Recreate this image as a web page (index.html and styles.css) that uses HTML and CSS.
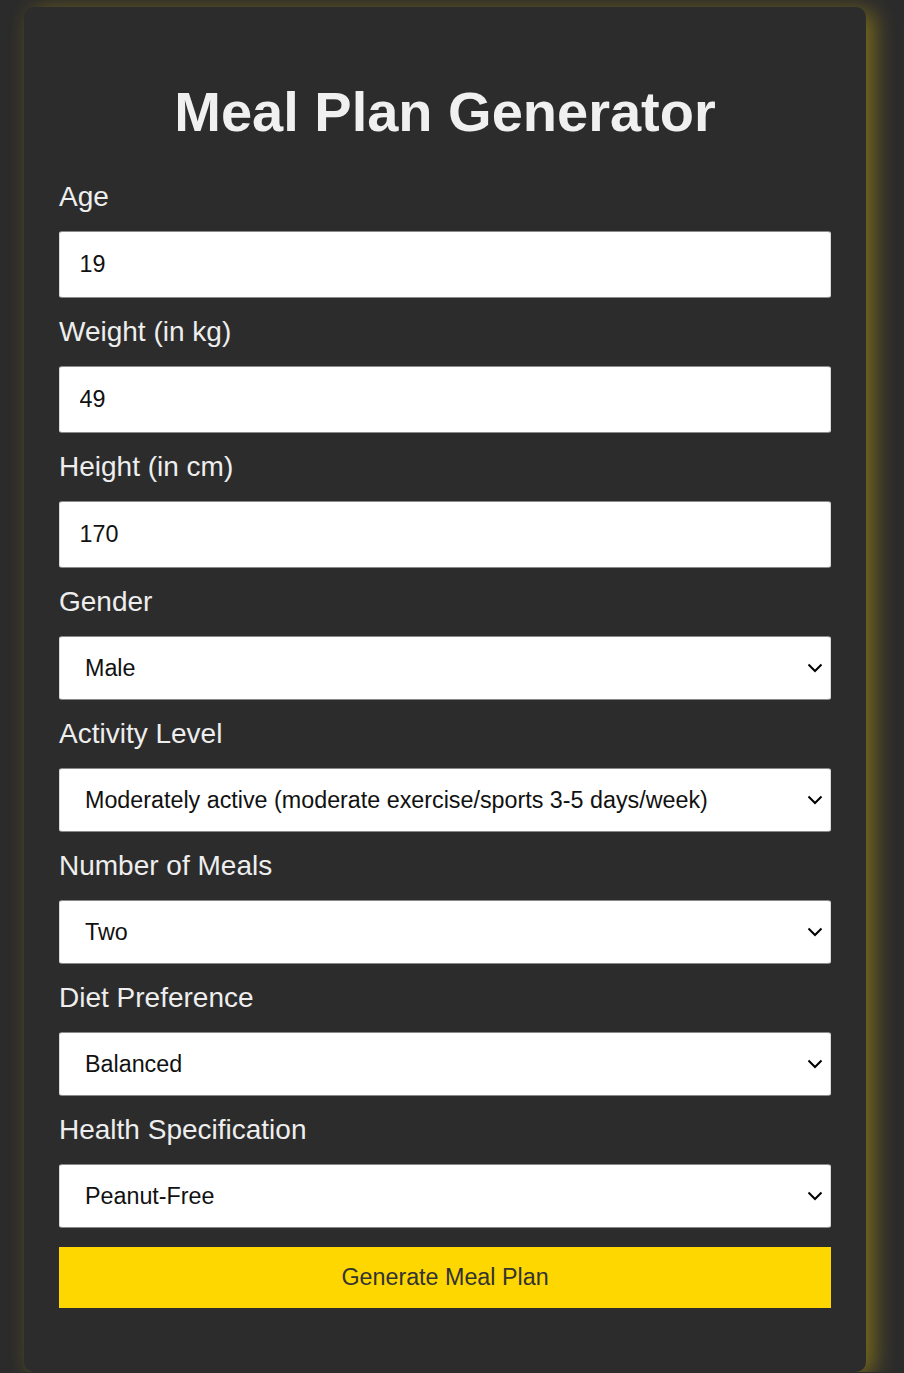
FILE: index.html
```html
<!DOCTYPE html>
<html lang="en">
<head>
<meta charset="utf-8">
<title>Meal Plan Generator</title>
<link rel="stylesheet" href="styles.css">
</head>
<body>
<div class="card">
  <h1 class="title">Meal Plan Generator</h1>
  <form class="form">
    <label class="label" for="age">Age</label>
    <input class="field" id="age" type="number" value="19">

    <label class="label" for="weight">Weight (in kg)</label>
    <input class="field" id="weight" type="number" value="49">

    <label class="label" for="height">Height (in cm)</label>
    <input class="field" id="height" type="number" value="170">

    <label class="label" for="gender">Gender</label>
    <select class="select" id="gender">
      <option>Male</option>
      <option>Female</option>
    </select>

    <label class="label" for="activity">Activity Level</label>
    <select class="select" id="activity">
      <option>Moderately active (moderate exercise/sports 3-5 days/week)</option>
    </select>

    <label class="label" for="meals">Number of Meals</label>
    <select class="select" id="meals">
      <option>Two</option>
    </select>

    <label class="label" for="diet">Diet Preference</label>
    <select class="select" id="diet">
      <option>Balanced</option>
    </select>

    <label class="label" for="health">Health Specification</label>
    <select class="select" id="health">
      <option>Peanut-Free</option>
    </select>

    <button class="button" type="button">Generate Meal Plan</button>
  </form>
</div>
</body>
</html>
```
FILE: styles.css
```css
html, body {
  margin: 0;
  padding: 0;
  background: #2b2b2b;
}

body {
  font-family: "Liberation Sans", Arial, sans-serif;
  padding: 7px 0 0 24px;
  overflow: hidden;
}

.card {
  box-sizing: border-box;
  width: 842px;
  height: 1365px;
  background: #2c2c2c;
  border-radius: 10px;
  padding: 35px 35px 0 35px;
  box-shadow: 8px 4px 22px rgba(255, 215, 0, 0.38);
}

.title {
  margin: 38px 0 37px;
  text-align: center;
  color: #f0f0f0;
  font-size: 56px;
  font-weight: bold;
  line-height: 64px;
}

.form {
  display: flex;
  flex-direction: column;
}

.label {
  display: block;
  color: #eeeeee;
  font-size: 28px;
  line-height: 32px;
  margin-bottom: 18px;
}

.field,
.select {
  box-sizing: border-box;
  width: 100%;
  margin: 0 0 18px;
  background: #ffffff;
  color: #111111;
  font-family: "Liberation Sans", Arial, sans-serif;
  font-size: 23.3px;
  border: 1px solid #8a8a8a;
  border-left-color: #d8d8d8;
  border-right-color: #d8d8d8;
  border-radius: 3px;
  outline: none;
}

.field {
  height: 67px;
  padding: 0 19.5px;
  -moz-appearance: textfield;
}

.field::-webkit-outer-spin-button,
.field::-webkit-inner-spin-button {
  -webkit-appearance: none;
  margin: 0;
}

.select {
  height: 64px;
  padding: 0 40px 0 25px;
  -webkit-appearance: none;
  appearance: none;
  background-image: url("data:image/svg+xml;utf8,<svg xmlns='http://www.w3.org/2000/svg' width='16' height='10' viewBox='0 0 16 10'><path d='M1.5 1.5 L8 8 L14.5 1.5' fill='none' stroke='black' stroke-width='2'/></svg>");
  background-repeat: no-repeat;
  background-position: right 7px center;
  background-size: 16px 10px;
}

.button {
  box-sizing: border-box;
  width: 100%;
  height: 61px;
  margin: 1px 0 0;
  border: none;
  border-radius: 0;
  background: #ffd700;
  color: #333333;
  font-family: "Liberation Sans", Arial, sans-serif;
  font-size: 23.3px;
  cursor: pointer;
}
```
